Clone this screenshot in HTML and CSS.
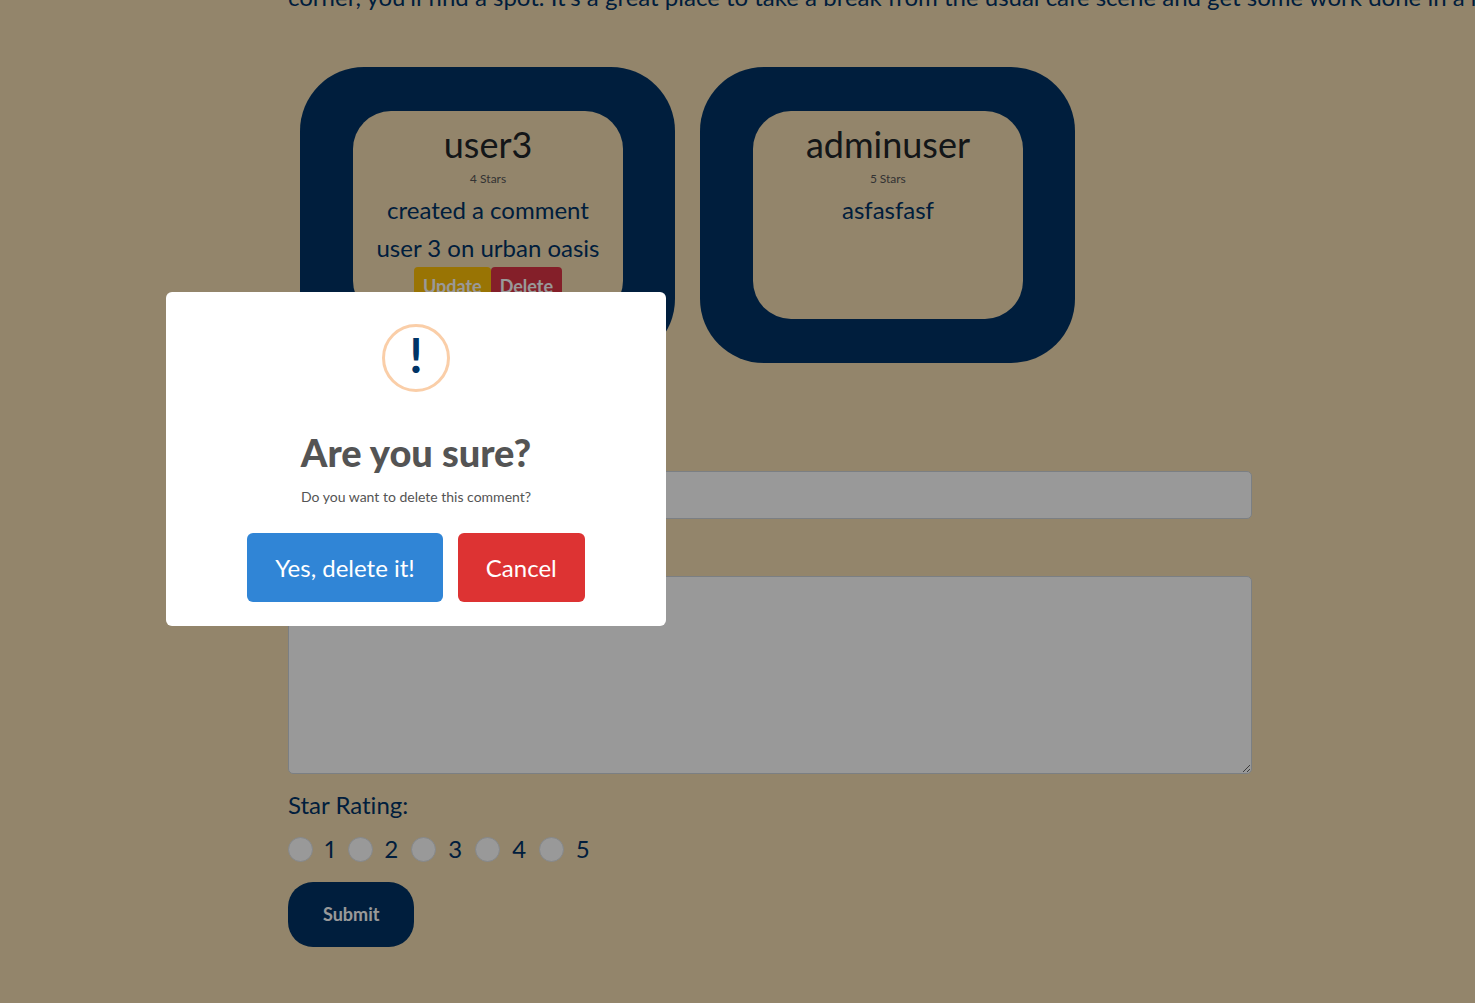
FILE: index.html
```html
<!DOCTYPE html>
<html lang="en">
<head>
<meta charset="utf-8">
<meta name="viewport" content="width=device-width, initial-scale=1">
<title>Urban Oasis</title>
<link rel="stylesheet" href="styles.css">
</head>
<body>
<main class="page">
  <p class="intro">corner, you'll find a spot. It's a great place to take a break from the usual cafe scene and get some work done in a re</p>

  <section class="reviews">
    <article class="review">
      <div class="review__body">
        <h2 class="review__name">user3</h2>
        <p class="review__stars">4 Stars</p>
        <p class="review__text">created a comment</p>
        <p class="review__text">user 3 on urban oasis</p>
        <div class="review__actions">
          <button class="action action--update" type="button">Update</button>
          <button class="action action--delete" type="button">Delete</button>
        </div>
      </div>
    </article>
    <article class="review">
      <div class="review__body">
        <h2 class="review__name">adminuser</h2>
        <p class="review__stars">5 Stars</p>
        <p class="review__text">asfasfasf</p>
      </div>
    </article>
  </section>

  <form class="form">
    <label class="form__label" for="title">Title:</label>
    <input class="form__control" id="title" type="text">
    <label class="form__label" for="comment">Comment:</label>
    <textarea class="form__control form__control--area" id="comment"></textarea>
    <fieldset class="rating">
      <legend class="rating__legend">Star Rating:</legend>
      <div class="rating__options">
        <label class="rating__option"><input class="rating__radio" type="radio" name="stars" value="1">1</label>
        <label class="rating__option"><input class="rating__radio" type="radio" name="stars" value="2">2</label>
        <label class="rating__option"><input class="rating__radio" type="radio" name="stars" value="3">3</label>
        <label class="rating__option"><input class="rating__radio" type="radio" name="stars" value="4">4</label>
        <label class="rating__option"><input class="rating__radio" type="radio" name="stars" value="5">5</label>
      </div>
    </fieldset>
    <button class="submit" type="submit">Submit</button>
  </form>
</main>

<div class="overlay">
  <div class="dialog" role="alertdialog" aria-modal="true" aria-labelledby="dialog-title" aria-describedby="dialog-text">
    <div class="dialog__icon">!</div>
    <h2 class="dialog__title" id="dialog-title">Are you sure?</h2>
    <p class="dialog__text" id="dialog-text">Do you want to delete this comment?</p>
    <div class="dialog__actions">
      <button class="dialog__button dialog__button--confirm" type="button">Yes, delete it!</button>
      <button class="dialog__button dialog__button--cancel" type="button">Cancel</button>
    </div>
  </div>
</div>
</body>
</html>
```

FILE: styles.css
```css
* {
  box-sizing: border-box;
}

body {
  margin: 0;
  background: #f5deb3;
  color: #003366;
  font-family: Lato, "Liberation Sans", sans-serif;
  font-size: 24px;
  line-height: 38px;
  font-variant-numeric: proportional-nums;
  font-variant-ligatures: none;
}

h2,
p {
  margin: 0;
}

button,
input,
textarea {
  font-family: inherit;
}

.page {
  margin-top: -22px;
  padding: 0 223px 56px 288px;
}

.intro {
  margin-right: -223px;
  overflow: hidden;
  white-space: nowrap;
}

.reviews {
  display: flex;
  gap: 25px;
  padding: 51px 12px 62px;
}

.review {
  flex: 0 0 375px;
  padding: 44px 52px 44px 53px;
  border-radius: 64px;
  background: #003366;
}

.review__body {
  min-height: 208px;
  padding-top: 12px;
  border-radius: 38px;
  background: #f5deb3;
  text-align: center;
}

.review__name {
  margin-bottom: 2px;
  color: #212529;
  font-size: 36px;
  font-weight: 400;
  line-height: 42px;
}

.review__stars {
  color: #555;
  font-size: 12px;
  line-height: 24px;
}

.review__text {
  line-height: 38px;
}

.review__actions {
  display: flex;
  justify-content: center;
}

.action {
  padding: 0 9px;
  border: 0;
  border-radius: 4px;
  color: #fff;
  font-size: 18px;
  font-weight: 700;
  line-height: 38px;
}

.action--update {
  background: #ffc107;
}

.action--delete {
  background: #dc3545;
}

.form__label {
  display: block;
  margin-bottom: 8px;
}

.form__control {
  display: block;
  width: 100%;
  height: 48px;
  margin-bottom: 11px;
  padding: 6px 12px;
  border: 1px solid #ced4da;
  border-radius: 5px;
  background: #fff;
  color: #495057;
  font-size: 24px;
}

.form__control--area {
  height: 198px;
  margin-bottom: 12px;
  resize: vertical;
}

.rating {
  margin: 0;
  padding: 0;
  border: 0;
}

.rating__legend {
  padding: 0;
}

.rating__options {
  display: flex;
  gap: 13px;
  margin: 6px 0 14px;
}

.rating__option {
  display: flex;
  align-items: center;
  gap: 12px;
}

.rating__radio {
  width: 25px;
  height: 25px;
  margin: 0;
  border: 1px solid #dee2e6;
  border-radius: 50%;
  background: #fff;
  appearance: none;
}

.submit {
  padding: 0 35px;
  border: 0;
  border-radius: 25px;
  background: #003366;
  color: #fff;
  font-size: 18px;
  font-weight: 700;
  line-height: 65px;
}

.overlay {
  position: fixed;
  inset: 0;
  background: rgba(0, 0, 0, 0.4);
}

.dialog {
  position: absolute;
  top: 292px;
  left: 166px;
  display: flex;
  flex-direction: column;
  align-items: center;
  width: 500px;
  padding: 32px 20px 24px;
  border-radius: 6px;
  background: #fff;
}

.dialog__icon {
  width: 68px;
  height: 68px;
  border: 3px solid #facea8;
  border-radius: 50%;
  font-size: 48px;
  font-weight: 700;
  line-height: 56px;
  text-align: center;
}

.dialog__title {
  margin-top: 36px;
  color: #545454;
  font-size: 38px;
  font-weight: 900;
  line-height: 48px;
}

.dialog__text {
  margin-top: 8px;
  color: #545454;
  font-size: 14px;
  line-height: 26px;
}

.dialog__actions {
  display: flex;
  gap: 15px;
  margin-top: 23px;
}

.dialog__button {
  padding: 0 28px;
  border: 0;
  border-radius: 6px;
  color: #fff;
  font-size: 24px;
  line-height: 69px;
}

.dialog__button--confirm {
  background: #3085d6;
}

.dialog__button--cancel {
  background: #dd3333;
}
```
